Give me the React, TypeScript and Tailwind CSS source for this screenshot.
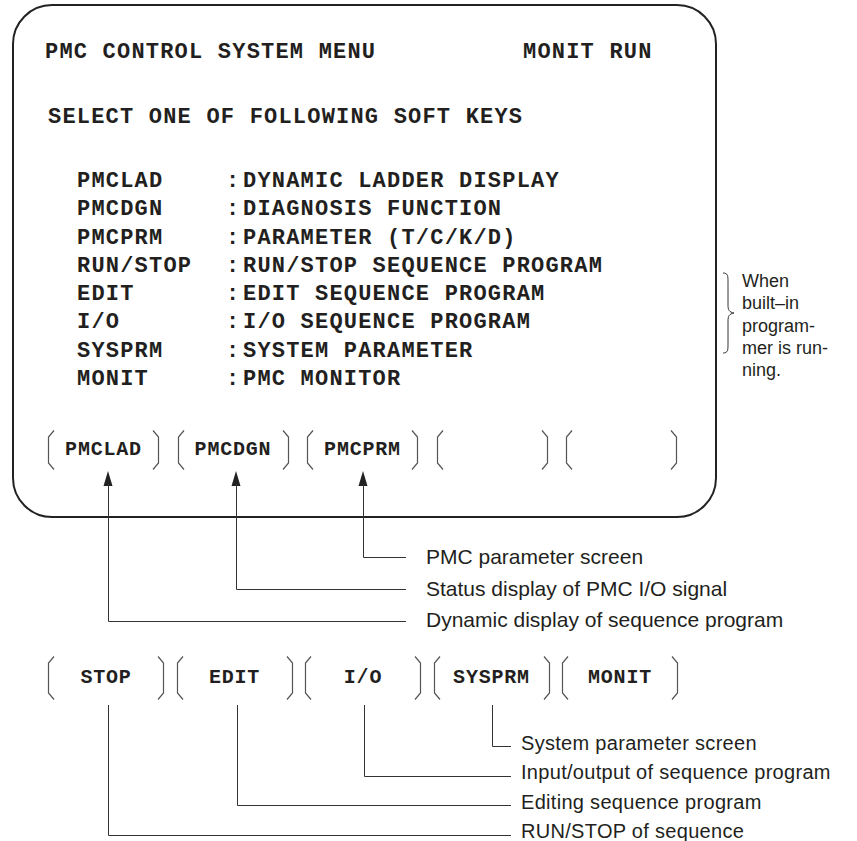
const menu = [
  ["PMCLAD", "DYNAMIC LADDER DISPLAY"],
  ["PMCDGN", "DIAGNOSIS FUNCTION"],
  ["PMCPRM", "PARAMETER (T/C/K/D)"],
  ["RUN/STOP", "RUN/STOP SEQUENCE PROGRAM"],
  ["EDIT", "EDIT SEQUENCE PROGRAM"],
  ["I/O", "I/O SEQUENCE PROGRAM"],
  ["SYSPRM", "SYSTEM PARAMETER"],
  ["MONIT", "PMC MONITOR"],
];

const topKeys = ["PMCLAD", "PMCDGN", "PMCPRM", "", ""];
const bottomKeys = ["STOP", "EDIT", "I/O", "SYSPRM", "MONIT"];

const topNotes = ["PMC parameter screen", "Status display of PMC I/O signal", "Dynamic display of sequence program"];
const bottomNotes = [
  "System parameter screen",
  "Input/output of sequence program",
  "Editing sequence program",
  "RUN/STOP of sequence",
];

// leader lines: [x, y of the horizontal run]
const topLeaders = [
  [108, 621],
  [236, 589],
  [363, 557],
];
const bottomLeaders = [
  [108, 835],
  [237, 805],
  [364, 776],
  [492, 746],
];

function Bracket({ side, h }: { side: "l" | "r"; h: number }) {
  const d =
    side === "l"
      ? `M7 0.5 L1.5 7 L1.5 ${h - 7} L7 ${h - 0.5}`
      : `M1 0.5 L6.5 7 L6.5 ${h - 7} L1 ${h - 0.5}`;
  return (
    <svg width="8" height={h} className="shrink-0">
      <path d={d} fill="none" stroke="#555" strokeWidth="1.2" />
    </svg>
  );
}

function SoftKey({ label, h, className }: { label: string; h: number; className: string }) {
  return (
    <div className={`flex items-center justify-between ${className}`}>
      <Bracket side="l" h={h} />
      <span className="text-[20px] font-bold tracking-[0.8px]">{label}</span>
      <Bracket side="r" h={h} />
    </div>
  );
}

function Leaders() {
  return (
    <svg width="857" height="841" className="pointer-events-none absolute left-0 top-0">
      {topLeaders.map(([x, y]) => (
        <g key={x}>
          <polygon points={`${x},471 ${x - 4.5},486 ${x + 4.5},486`} fill="#222" />
          <path d={`M${x + 0.5} 484 L${x + 0.5} ${y + 0.5} L406 ${y + 0.5}`} fill="none" stroke="#333" strokeWidth="1" />
        </g>
      ))}
      {bottomLeaders.map(([x, y]) => (
        <path key={x} d={`M${x + 0.5} 705 L${x + 0.5} ${y + 0.5} L511 ${y + 0.5}`} fill="none" stroke="#333" strokeWidth="1" />
      ))}
    </svg>
  );
}

export default function App() {
  return (
    <div className="relative h-[841px] w-[857px] overflow-hidden bg-white text-[#231f20]">
      <div className="flex">
        {/* CRT screen */}
        <div className="ml-[12px] mt-[4px] flex h-[514px] w-[705px] shrink-0 flex-col rounded-[40px] border-2 border-[#222] pl-[31px] pt-[33px] font-['Liberation_Mono',monospace] text-[22px] font-bold tracking-[1.2px]">
          <div className="flex leading-[28px]">
            <span className="w-[478px]">PMC CONTROL SYSTEM MENU</span>
            <span>MONIT RUN</span>
          </div>
          <div className="ml-[3px] mt-[37px] leading-[28px]">SELECT ONE OF FOLLOWING SOFT KEYS</div>
          <div className="ml-[32px] mt-[36px] grid grid-cols-[149px_17px_auto] leading-[28.3px]">
            {menu.map(([key, desc]) => (
              <div key={key} className="contents">
                <span>{key}</span>
                <span>:</span>
                <span>{desc}</span>
              </div>
            ))}
          </div>
          <div className="ml-[2px] mt-[36px] flex gap-[16.5px]">
            {topKeys.map((k, i) => (
              <SoftKey key={i} label={k} h={40} className="w-[113px]" />
            ))}
          </div>
        </div>

        {/* side note */}
        <div className="ml-[5px] mt-[270px] flex items-start">
          <svg width="14" height="82" className="mt-[2px] shrink-0">
            <path
              d="M1 1 C6 1 6 4 6 10 L6 33 C6 38 7 40 12 41 C7 42 6 44 6 49 L6 72 C6 78 6 81 1 81"
              fill="none"
              stroke="#333"
              strokeWidth="1"
            />
          </svg>
          <div className="ml-[6px] font-['Liberation_Sans',Arial,sans-serif] text-[18px] leading-[22.3px]">
            <p>When</p>
            <p>built–in</p>
            <p>program-</p>
            <p>mer is run-</p>
            <p>ning.</p>
          </div>
        </div>
      </div>

      <div className="ml-[426px] mt-[23px] font-['Liberation_Sans',Arial,sans-serif] text-[21px] leading-[31.5px]">
        {topNotes.map((n) => (
          <p key={n}>{n}</p>
        ))}
      </div>

      <div className="ml-[47px] mt-[20px] flex gap-[10.5px] font-['Liberation_Mono',monospace]">
        {bottomKeys.map((k) => (
          <SoftKey key={k} label={k} h={44} className="w-[118px]" />
        ))}
      </div>

      <div className="ml-[521px] mt-[29px] font-['Liberation_Sans',Arial,sans-serif] text-[20px] leading-[29.6px] tracking-[0.3px]">
        {bottomNotes.map((n) => (
          <p key={n}>{n}</p>
        ))}
      </div>

      <Leaders />
    </div>
  );
}
